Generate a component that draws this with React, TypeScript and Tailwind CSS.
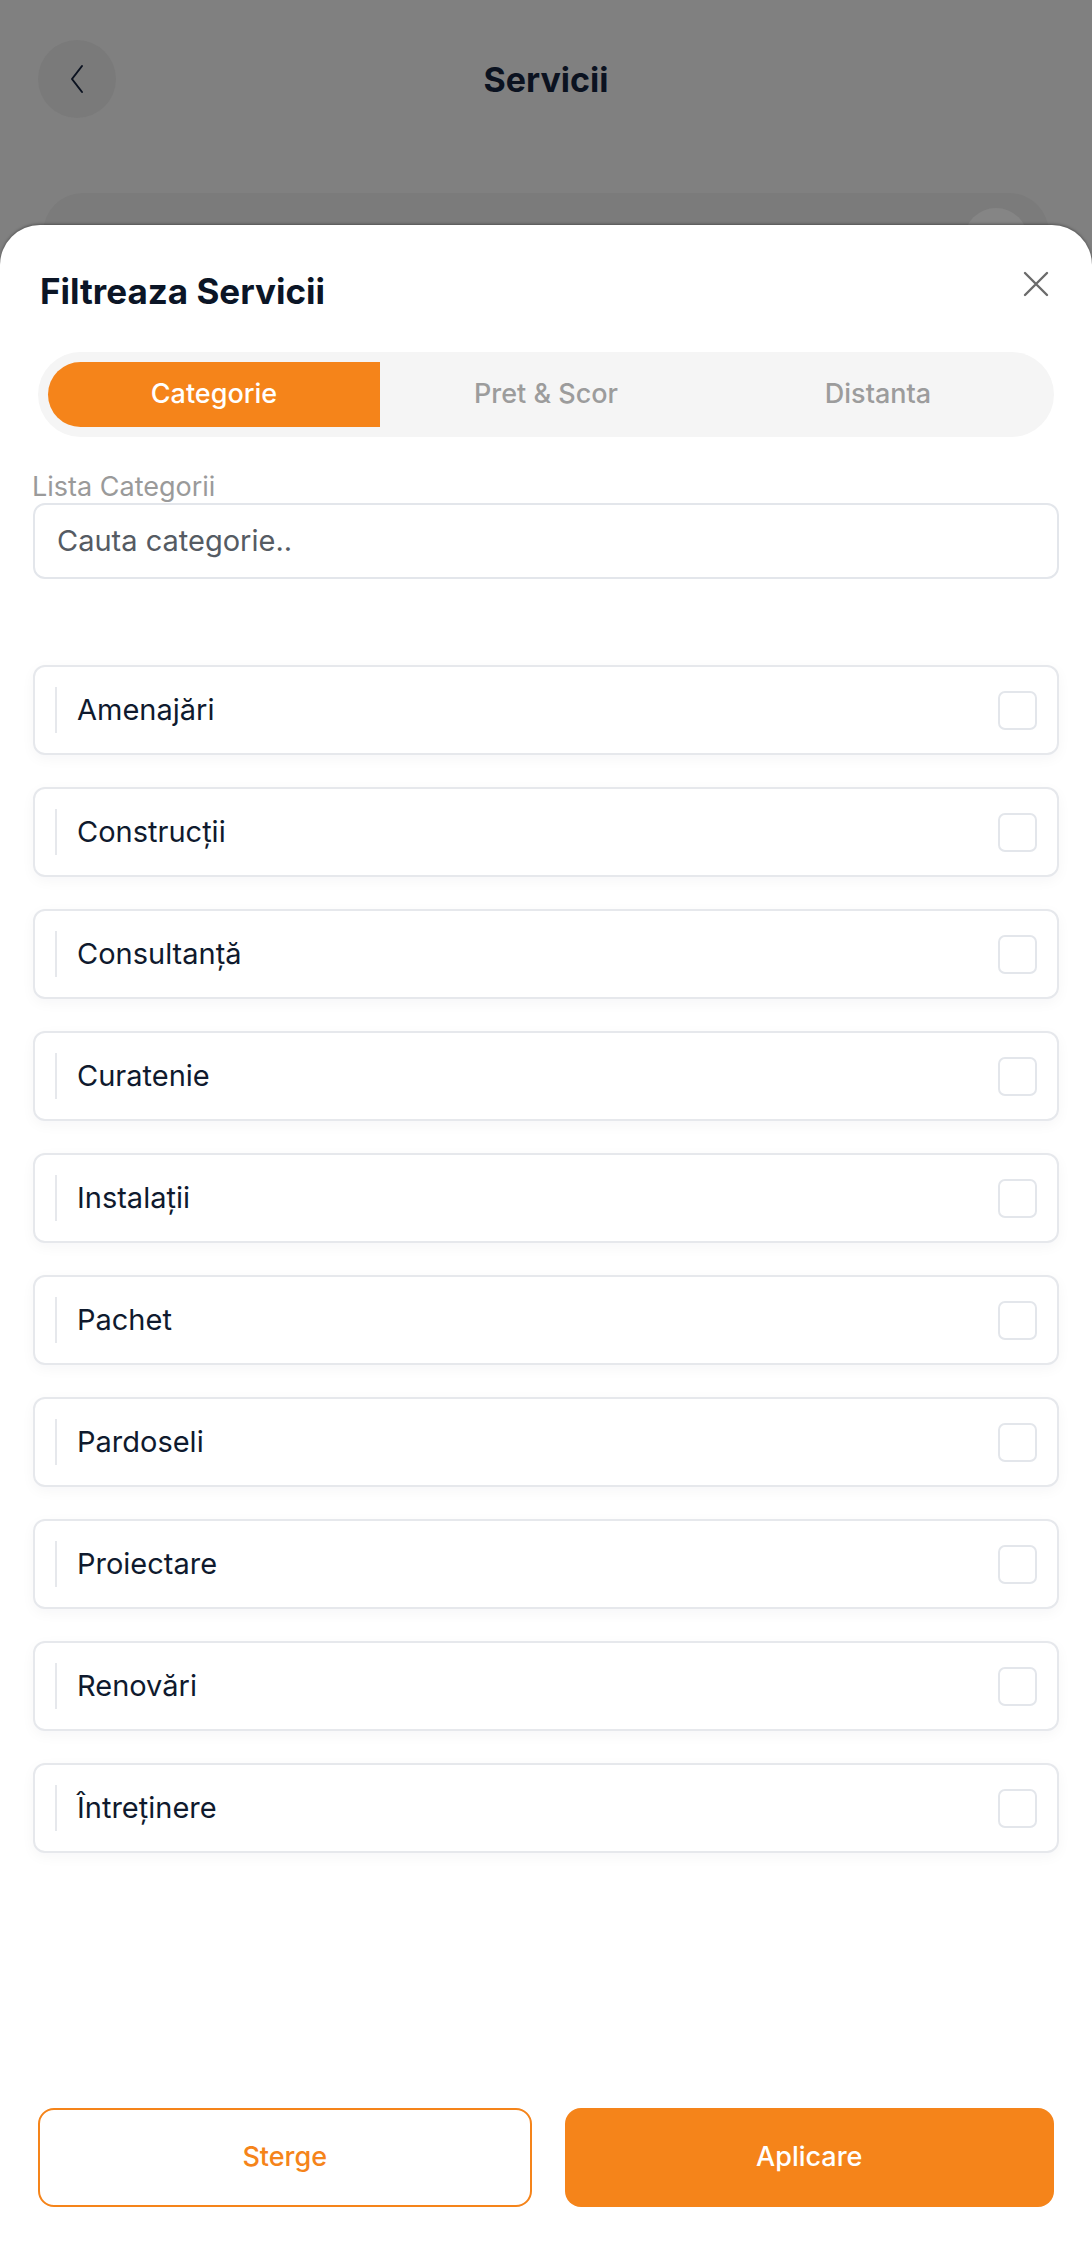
import React from "react"

const categories = [
  "Amenajări",
  "Construcții",
  "Consultanță",
  "Curatenie",
  "Instalații",
  "Pachet",
  "Pardoseli",
  "Proiectare",
  "Renovări",
  "Întreținere",
]

const tabs = ["Categorie", "Pret & Scor", "Distanta"]

export default function App() {
  return (
    <div
      className="relative w-[1092px] h-[2248px] overflow-hidden bg-[#808080]"
      style={{ fontFamily: "Inter, 'Noto Sans', sans-serif" }}
    >
      {/* page behind the sheet */}
      <div className="pt-[40px]">
        <div className="relative flex h-[78px] items-center justify-center">
          <div className="absolute left-[38px] top-0 flex h-[78px] w-[78px] items-center justify-center rounded-full bg-[#7a7a7a]">
            <svg width="18" height="30" viewBox="0 0 18 30" fill="none">
              <path d="M14 2L4 15L14 28" stroke="#0b1220" strokeWidth="2" strokeLinecap="round" strokeLinejoin="round" />
            </svg>
          </div>
          <h1 className="text-[34px] font-bold text-[#0b1220]">Servicii</h1>
        </div>
        <div className="mx-[43px] mt-[75px] flex h-[100px] items-start justify-end rounded-[40px] bg-[#7b7b7b] pr-[21px] pt-[15px]">
          <div className="h-[64px] w-[64px] rounded-full bg-[#858585]" />
        </div>
      </div>

      {/* bottom sheet */}
      <div className="absolute inset-x-0 bottom-0 top-[225px] flex flex-col rounded-t-[40px] bg-white px-[33px] pt-[46px] shadow-[0_-1px_3px_rgba(0,0,0,0.35)]">
        <div className="flex h-[40px] items-center justify-between pl-[7px] pr-[10px]">
          <h2 className="text-[35px] font-bold leading-[40px] text-[#0b1526]">Filtreaza Servicii</h2>
          <svg width="26" height="26" viewBox="0 0 26 26" fill="none" className="-mt-[14px]">
            <path d="M2 2L24 24M24 2L2 24" stroke="#6b6b6b" strokeWidth="2.4" strokeLinecap="round" />
          </svg>
        </div>

        <div className="mx-[5px] mt-[41px] flex h-[85px] rounded-full bg-[#f5f5f5] p-[10px]">
          {tabs.map((tab, i) => (
            <div
              key={tab}
              className={
                i === 0
                  ? "flex flex-1 items-center justify-center rounded-l-full bg-[#f5841a] text-[27px] font-medium text-white"
                  : "flex flex-1 items-center justify-center text-[27px] font-medium text-[#9c9c9c]"
              }
            >
              {tab}
            </div>
          ))}
        </div>

        <div className="mt-[33px] -ml-[1px] text-[27px] leading-[33px] text-[#9a9a9a]">Lista Categorii</div>
        <div className="flex h-[76px] items-center rounded-[12px] border-2 border-[#e3e6eb] px-[22px] text-[29px] text-[#555b63]">
          Cauta categorie..
        </div>

        <div className="mt-[86px] flex flex-col gap-[32px]">
          {categories.map((cat) => (
            <div
              key={cat}
              className="flex h-[90px] items-center rounded-[12px] border-2 border-[#e6e8ec] bg-white pl-[20px] pr-[20px] shadow-[0_4px_14px_rgba(15,23,42,0.04)]"
            >
              <div className="h-[46px] w-[2px] bg-[#e6e8ec]" />
              <span className="ml-[20px] flex-1 text-[29px] text-[#0f1a2e]">{cat}</span>
              <div className="h-[39px] w-[39px] rounded-[7px] border-2 border-[#e3e6eb]" />
            </div>
          ))}
        </div>

        <div className="mt-auto mx-[5px] mb-[41px] flex gap-[33px]">
          <button className="flex h-[99px] flex-1 items-center justify-center rounded-[16px] border-2 border-[#f5841a] bg-white text-[27px] font-medium text-[#f5841a]">
            Sterge
          </button>
          <button className="flex h-[99px] flex-1 items-center justify-center rounded-[16px] bg-[#f5841a] text-[27px] font-medium text-white">
            Aplicare
          </button>
        </div>
      </div>
    </div>
  )
}
